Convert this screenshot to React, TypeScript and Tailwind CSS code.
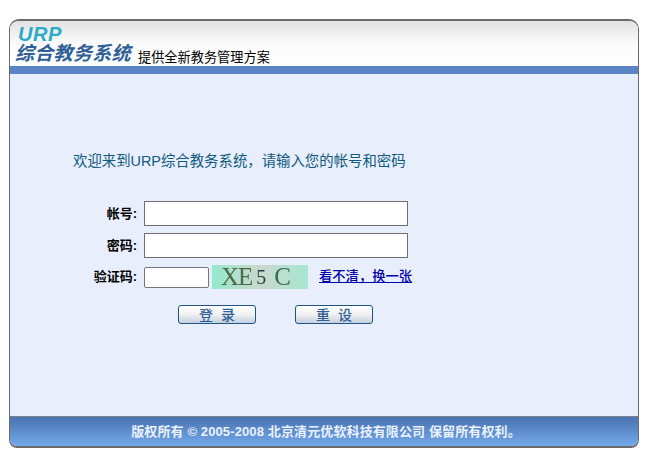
export default function App() {
  const cjk = "font-['Liberation_Sans','Noto_Sans_CJK_SC',sans-serif]";
  const button = "w-[78px] h-[19px] flex items-center justify-center rounded-[3px] border border-[#1f5488] bg-gradient-to-b from-[#ffffff] via-[#f1f1f1] to-[#c4d0e0] text-[14px] leading-[16px] font-medium text-[#2f5f96] tracking-[8px] pl-[8px]";
  return (
    <div className={`w-[650px] h-[457px] bg-white pt-[19px] pl-[9px] ${cjk}`}>
      <div className="w-[630px] h-[429px] flex flex-col rounded-t-[10px] rounded-b-[8px] overflow-hidden border border-[#6b6b6b] border-t-2 border-b-2 bg-[#e8eefb]">
        <div className="h-[45px] flex items-end bg-gradient-to-b from-[#e2e2e2] via-[#fbfbfb] to-white pl-[5px]">
          <div className="flex flex-col h-full w-[123px] italic font-bold">
            <div className="h-[21px] pt-[4px] text-[20px] leading-[18px] text-[#2eabc9] tracking-[0.5px] pl-[3px]">URP</div>
            <div className="mt-[2px] text-[19px] leading-[20px] text-[#2f5f96] whitespace-nowrap tracking-[0.3px]">综合教务系统</div>
          </div>
          <div className="text-[13.2px] leading-[17px] text-black whitespace-nowrap">提供全新教务管理方案</div>
        </div>
        <div className="h-[8px] bg-[#5a84c4]" />
        <div className="flex-1 flex flex-col pl-[63px] pt-[79px]">
          <div className="text-[14.4px] leading-[16px] text-[#0f5a80]">欢迎来到URP综合教务系统，请输入您的帐号和密码</div>
          <div className="mt-[32px] flex flex-col gap-[7px] text-[13px] text-black font-bold">
            <div className="flex items-center h-[25px]">
              <span className="w-[64px] text-right whitespace-nowrap">帐号:</span>
              <div className="ml-[7px] w-[264px] h-[25px] bg-white border border-[#6e6e6e]" />
            </div>
            <div className="flex items-center h-[25px]">
              <span className="w-[64px] text-right whitespace-nowrap">密码:</span>
              <div className="ml-[7px] w-[264px] h-[25px] bg-white border border-[#6e6e6e]" />
            </div>
            <div className="flex items-center h-[24px]">
              <span className="w-[64px] text-right whitespace-nowrap">验证码:</span>
              <div className="ml-[7px] w-[65px] h-[21px] bg-white border border-[#767676] rounded-[2px]" />
              <div className="ml-[3px] w-[96px] h-[24px] flex items-center pl-[9px] bg-gradient-to-r from-[#93e9cc] via-[#c9d8cc] to-[#a6e6d2] font-['Liberation_Serif',serif] font-normal text-[25px] leading-[24px] whitespace-nowrap">
                <span className="text-[#4f6a48] tracking-[-1px] blur-[0.4px]">XE</span>
                <span className="ml-[4px] text-[#24404a] text-[20px] blur-[0.4px]">5</span>
                <span className="ml-[8px] text-[#36685a] blur-[0.4px]">C</span>
              </div>
              <a className="ml-[11px] text-[13.3px] leading-[16px] font-medium text-[#0000aa] underline whitespace-nowrap">看不清，换一张</a>
            </div>
          </div>
          <div className="mt-[16px] ml-[105px] flex gap-[39px]">
            <div className={button}>登录</div>
            <div className={button}>重设</div>
          </div>
        </div>
        <div className="h-[30px] flex items-center justify-center pl-[4px] border-t border-[#7b7f88] bg-gradient-to-b from-[#4a72b0] to-[#74aaeb] text-[13px] font-bold tracking-[0.12px] text-[#eaf2ff] whitespace-nowrap">
          版权所有 © 2005-2008 北京清元优软科技有限公司 保留所有权利。
        </div>
      </div>
    </div>
  );
}
